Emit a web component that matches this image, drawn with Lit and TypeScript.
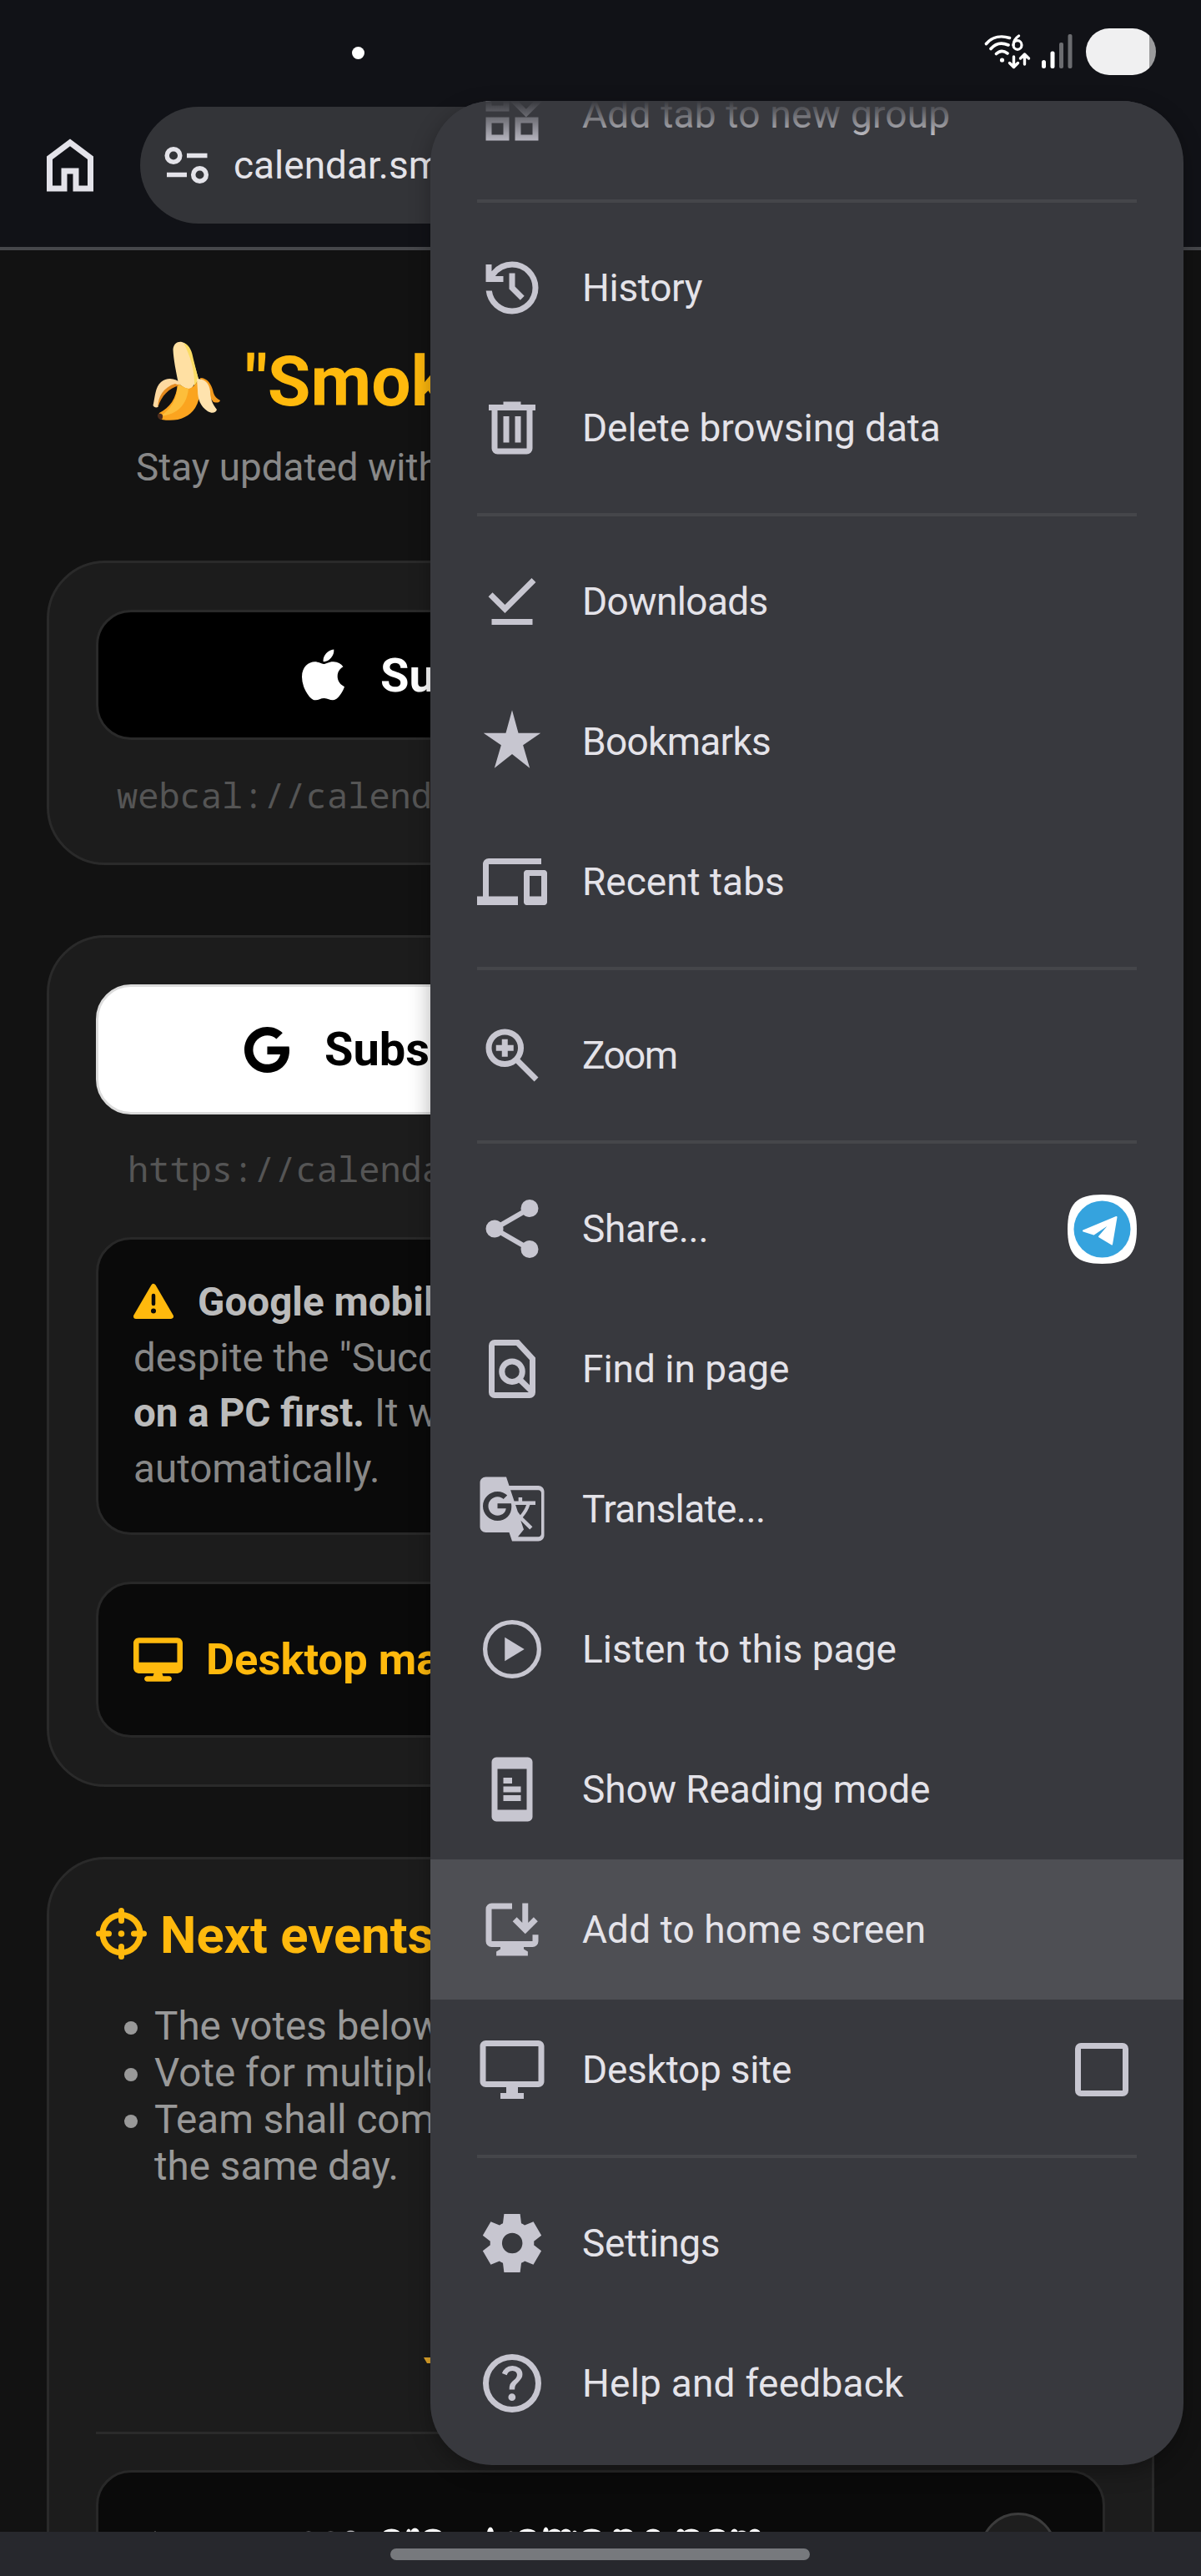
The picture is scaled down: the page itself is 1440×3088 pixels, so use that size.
import { LitElement, html, css, svg, nothing } from "lit";
import type { SVGTemplateResult } from "lit";
import { customElement, property } from "lit/decorators.js";

type MenuEntry = {
  icon: string;
  label: string;
  /** Letter spacing in px. */
  track?: number;
  active?: boolean;
  trailing?: "telegram" | "checkbox";
};

/** Icons drawn on the 960-unit Material Symbols grid. */
const SYMBOLS: Record<string, string> = {
  home: "M240-200h120v-240h240v240h120v-360L480-740 240-560v360Zm-80 80v-480l320-240 320 240v480H520v-240h-80v240H160Z",
  history:
    "M480-120q-138 0-240.5-91.5T122-440h82q14 104 92.5 172T480-200q117 0 198.5-81.5T760-480q0-117-81.5-198.5T480-760q-69 0-129 32t-101 88h110v80H120v-240h80v94q51-64 124.5-99T480-840q75 0 140.5 28.5t114 77q48.5 48.5 77 114T840-480q0 75-28.5 140.5t-77 114q-48.5 48.5-114 77T480-120Zm112-192L440-464v-216h80v184l128 128-56 56Z",
  trash:
    "M280-120q-33 0-56.5-23.5T200-200v-520h-40v-80h200v-40h240v40h200v80h-40v520q0 33-23.5 56.5T680-120H280Zm400-600H280v520h400v-520ZM360-280h80v-360h-80v360Zm160 0h80v-360h-80v360Z",
  downloads: "M382-320 155-547l57-57 170 170 366-366 57 57-423 423ZM200-160v-80h560v80H200Z",
  star: "M480-911 566-598H872L630-432 722-116 480-310 238-116 330-432 88-598H394Z",
  zoom: "M784-120 532-372q-30 24-69 38t-83 14q-109 0-184.5-75.5T120-580q0-109 75.5-184.5T380-840q109 0 184.5 75.5T640-580q0 44-14 83t-38 69l252 252-56 56ZM380-400q75 0 127.5-52.5T560-580q0-75-52.5-127.5T380-760q-75 0-127.5 52.5T200-580q0 75 52.5 127.5T380-400Zm-40-60v-80h-80v-80h80v-80h80v80h80v80h-80v80h-80Z",
  share:
    "M720-80q-50 0-85-35t-35-85q0-7 1-14.5t3-13.5L322-392q-17 15-38 23.5t-44 8.5q-50 0-85-35t-35-85q0-50 35-85t85-35q23 0 44 8.5t38 23.5l282-164q-2-6-3-13.5t-1-14.5q0-50 35-85t85-35q50 0 85 35t35 85q0 50-35 85t-85 35q-23 0-44-8.5T638-672L356-508q2 6 3 13.5t1 14.5q0 7-1 14.5t-3 13.5l282 164q17-15 38-23.5t44-8.5q50 0 85 35t35 85q0 50-35 85t-85 35Z",
  settings:
    "m370-80-16-128q-13-5-24.5-12T307-235l-119 50L78-375l103-78q-1-7-1-13.5v-27q0-6.5 1-13.5L78-585l110-190 119 50q11-8 23-15t24-12l16-128h220l16 128q13 5 24.5 12t22.5 15l119-50 110 190-103 78q1 7 1 13.5v27q0 6.5-2 13.5l103 78-110 190-118-50q-11 8-23 15t-24 12L590-80H370Zm112-260q58 0 99-41t41-99q0-58-41-99t-99-41q-59 0-99.5 41T342-480q0 58 40.5 99t99.5 41Z",
  help: "M478-240q21 0 35.5-14.5T528-290q0-21-14.5-35.5T478-340q-21 0-35.5 14.5T428-290q0 21 14.5 35.5T478-240Zm-36-154h74q0-33 7.5-52t42.5-52q26-26 41-49.5t15-56.5q0-56-41-86t-97-30q-57 0-92.5 30T342-618l66 26q5-18 22.5-39t53.5-21q32 0 48 17.5t16 38.5q0 20-12 37.5T506-526q-44 39-54 59t-10 73Zm38 314q-83 0-156-31.5T197-197q-54-54-85.5-127T80-480q0-83 31.5-156T197-763q54-54 127-85.5T480-880q83 0 156 31.5T763-763q54 54 85.5 127T880-480q0 83-31.5 156T763-197q-54 54-127 85.5T480-80Zm0-80q134 0 227-93t93-227q0-134-93-227t-227-93q-134 0-227 93t-93 227q0 134 93 227t227 93Z",
};

/** Icons drawn on the 24-unit grid. */
const GLYPHS: Record<string, SVGTemplateResult> = {
  group: svg`<g fill="none" stroke="currentColor" stroke-width="2">
      <path d="M4 4h6v6H4zM4 14h6v6H4zM14 14h6v6h-6z" />
      <path d="M16.8 3.1 21 7.4l-4.2 4.2-4.2-4.2z" />
    </g>`,
  devices: svg`<path d="M4 6h18V4H4c-1.1 0-2 .9-2 2v11H0v3h14v-3H4V6zm19 2h-6c-.55 0-1 .45-1 1v10c0 .55.45 1 1 1h6c.55 0 1-.45 1-1V9c0-.55-.45-1-1-1zm-1 9h-4v-7h4v7z" />`,
  find: svg`<g fill="none" stroke="currentColor" stroke-width="2">
      <path d="M5 4a1 1 0 0 1 1-1h7.9L19 8.5V20a1 1 0 0 1-1 1H6a1 1 0 0 1-1-1Z" />
      <circle cx="12" cy="12.9" r="3.5" />
      <path d="m14.4 15.4 4.5 4.4" />
    </g>`,
  translate: svg`<path d="M21 4H11l-1-3H3c-1.1 0-2 .9-2 2v15c0 1.1.9 2 2 2h8l1 3h9c1.1 0 2-.9 2-2V6c0-1.1-.9-2-2-2zM7 16c-2.76 0-5-2.24-5-5s2.24-5 5-5c1.35 0 2.48.5 3.35 1.3L9.03 8.57c-.38-.36-1.04-.78-2.03-.78-1.74 0-3.15 1.44-3.15 3.21S5.26 14.21 7 14.21c2.01 0 2.84-1.44 2.92-2.41H7v-1.71h4.68c.07.31.12.61.12 1.02C11.8 13.97 9.89 16 7 16zm6.17-5.42h3.7c-.43 1.25-1.11 2.43-2.05 3.47-.31-.35-.6-.72-.86-1.1l-.79-2.37zm8.83 9.92c0 .55-.45 1-1 1H14l2-2.5-1.04-3.1 3.1 3.1.92-.92-3.3-3.25.02-.02c1.13-1.25 1.93-2.69 2.4-4.22H20v-1.3h-4.53V8h-1.29v1.29h-1.44L11.46 5.5h9.54c.55 0 1 .45 1 1v14z" />`,
  listen: svg`<circle cx="12" cy="12" r="9.25" fill="none" stroke="currentColor" stroke-width="1.5" />
    <path d="M9.5 7.9v8.2L16.2 12z" />`,
  reading: svg`<path fill-rule="evenodd" d="M6.6 1h10.8A1.6 1.6 0 0 1 19 2.6v18.8a1.6 1.6 0 0 1-1.6 1.6H6.6A1.6 1.6 0 0 1 5 21.4V2.6A1.6 1.6 0 0 1 6.6 1ZM7 5v14h10V5Z" />
    <path d="M9 8h3v2H9zM9 11h6v2H9zM9 14h6v2H9z" />`,
  install: svg`<g fill="none" stroke="currentColor" stroke-width="2">
      <path d="M12 4H5a1 1 0 0 0-1 1v11a1 1 0 0 0 1 1h14a1 1 0 0 0 1-1v-2.2" />
      <path d="M16.5 3v9.2M12.9 8.5l3.6 3.6 3.6-3.6" />
    </g>
    <path d="M8 17.500h8v1.200l1.400.9V21H6.600v-1.400l1.400-.9z" />`,
  desktop: svg`<path d="M21 2H3c-1.1 0-2 .9-2 2v12c0 1.1.9 2 2 2h7v2H8v2h8v-2h-2v-2h7c1.1 0 2-.9 2-2V4c0-1.1-.9-2-2-2zm0 14H3V4h18v12z" />`,
};

const SECTIONS: MenuEntry[][] = [
  [{ icon: "group", label: "Add tab to new group", track: 0.22 }],
  [
    { icon: "history", label: "History", track: -0.3 },
    { icon: "trash", label: "Delete browsing data", track: -0.08 },
  ],
  [
    { icon: "downloads", label: "Downloads", track: -0.65 },
    { icon: "star", label: "Bookmarks", track: -0.7 },
    { icon: "devices", label: "Recent tabs" },
  ],
  [{ icon: "zoom", label: "Zoom", track: -1.6 }],
  [
    { icon: "share", label: "Share...", track: -0.3, trailing: "telegram" },
    { icon: "find", label: "Find in page" },
    { icon: "translate", label: "Translate...", track: -0.6 },
    { icon: "listen", label: "Listen to this page", track: 0.05 },
    { icon: "reading", label: "Show Reading mode", track: -0.12 },
    { icon: "install", label: "Add to home screen", track: 0.1, active: true },
    { icon: "desktop", label: "Desktop site", track: -0.25, trailing: "checkbox" },
  ],
  [
    { icon: "settings", label: "Settings", track: -0.35 },
    { icon: "help", label: "Help and feedback", track: 0.22 },
  ],
];

@customElement("menu-icon")
class MenuIcon extends LitElement {
  @property() name = "";

  static styles = css`
    :host { display: block; width: 84px; height: 84px; flex: none; }
    svg { display: block; width: 100%; height: 100%; fill: currentColor; }
  `;

  render() {
    const path = SYMBOLS[this.name];
    return path
      ? html`<svg viewBox="0 -960 960 960" aria-hidden="true"><path d=${path} /></svg>`
      : html`<svg viewBox="0 0 24 24" aria-hidden="true">${GLYPHS[this.name]}</svg>`;
  }
}

@customElement("status-bar")
class StatusBar extends LitElement {
  static styles = css`
    :host { display: flex; height: 128px; box-sizing: border-box; padding: 34px 54px 38px 422px; background: #111217; align-items: center; justify-content: space-between; }
    .dot { width: 15px; height: 15px; border-radius: 50%; background: #fff; margin-top: 2px; }
    .right { display: flex; align-items: center; }
    svg { display: block; }
    .bars { margin-left: 13px; }
    .battery { width: 84px; height: 56px; margin-left: 16px; border-radius: 28px; background: linear-gradient(to right, #f0f0f1 76px, #9b9b9d 76px); }
  `;

  render() {
    return html`
      <span class="dot"></span>
      <div class="right">
        <svg width="56" height="42" viewBox="0 0 56 42" fill="none" stroke="#fff" stroke-linecap="round">
          <path stroke-width="3.600" d="M2.500 11.500C10 2.500 21 1.500 30.500 4.500M8 17.500c6-7 13-8 21-4.500M14.500 23.500c4-4 9-4 13.500-.5" />
          <circle cx="21.500" cy="31" r="2.600" fill="#fff" stroke="none" />
          <path stroke-width="3.200" d="M41.500 2c-4.500 3-6.500 7-6.500 11" />
          <ellipse cx="40" cy="13" rx="5" ry="5.300" stroke-width="3.200" />
          <path stroke-width="3.400" stroke-linejoin="round" d="M35.500 27v12M30.500 34.500l5 5 5-5M48.500 36V24M43.500 29l5-5 5 5" />
        </svg>
        <svg class="bars" width="37" height="42" viewBox="0 0 37 42">
          <rect x="0" y="31" width="5" height="10" rx="2.500" fill="#fff" />
          <rect x="10.500" y="20.500" width="5" height="20.500" rx="2" fill="#fff" />
          <rect x="21" y="10" width="5" height="31" rx="2" fill="#6b6c70" />
          <rect x="31.500" y="0" width="5" height="41" rx="2" fill="#6b6c70" />
        </svg>
        <div class="battery"></div>
      </div>
    `;
  }
}

@customElement("browser-toolbar")
class BrowserToolbar extends LitElement {
  static styles = css`
    :host { display: flex; height: 172px; box-sizing: border-box; padding-bottom: 28px; padding-left: 42px; border-bottom: 4px solid #46474b; background: #111217; align-items: center; gap: 42px; color: #e3e2e9; }
    .omnibox { flex: 1; height: 140px; margin-right: 56px; box-sizing: border-box; padding-left: 29px; display: flex; align-items: center; border-radius: 70px; background: #333438; font: 46px/54px Roboto, sans-serif; color: #e4e3e9; }
    .tune { display: block; margin-right: 29px; }
  `;

  render() {
    return html`
      <menu-icon name="home"></menu-icon>
      <div class="omnibox">
        <svg class="tune" width="54" height="46" viewBox="0 0 54 46" fill="none" stroke="currentColor" stroke-width="5.500">
          <circle cx="11" cy="11.500" r="7.800" />
          <path d="M27 11.500h24.500M3 34.500h24" />
          <circle cx="42.500" cy="34.500" r="7.800" />
        </svg>
        <span>calendar.sm</span>
      </div>
    `;
  }
}

@customElement("overflow-menu")
class OverflowMenu extends LitElement {
  static styles = css`
    :host { display: flex; flex-direction: column; justify-content: flex-end; box-sizing: border-box; padding-bottom: 14px; overflow: hidden; border-radius: 74px; background: #38393e; box-shadow: 0 8px 26px rgba(0, 0, 0, 0.3); font-family: Roboto, sans-serif; }
    .list { flex: none; display: flex; flex-direction: column; }
    .row { height: 168px; display: flex; align-items: center; padding: 0 56px; box-sizing: border-box; color: #c7c6d0; }
    .row.active { background: #4e4f54; }
    .label { margin-left: 42px; flex: 1; font-size: 46px; line-height: 54px; white-space: nowrap; color: #e4e3e9; }
    .divider { height: 4px; margin: 18px 56px; background: #45464a; }
    .fade { position: absolute; inset: 0 0 auto 0; height: 54px; background: linear-gradient(to bottom, #38393e, rgba(56, 57, 62, 0)); }
    .box { width: 64px; height: 64px; box-sizing: border-box; border: 7px solid #c7c6d0; border-radius: 7px; margin-right: 10px; }
    .app { display: block; }
  `;

  private trailing(kind: MenuEntry["trailing"]) {
    if (kind === "checkbox") return html`<span class="box"></span>`;
    if (kind === "telegram") {
      return html`<svg class="app" width="83" height="83" viewBox="0 0 83 83">
        <path fill="#fff" d="M41.500 0C72 0 83 11 83 41.500S72 83 41.500 83 0 72 0 41.500 11 0 41.500 0Z" />
        <circle cx="41.500" cy="41.500" r="34" fill="#35a3de" />
        <path fill="#fff" stroke="#fff" stroke-width="2" stroke-linejoin="round" d="M19 43.500 58.500 27 53 59.500 38 50.500 53 33 31.500 47.500Z" />
      </svg>`;
    }
    return nothing;
  }

  render() {
    return html`
      <div class="list">
        ${SECTIONS.map(
          (section, i) => html`
            ${i ? html`<div class="divider"></div>` : nothing}
            ${section.map(
              (e) => html`<div class="row ${e.active ? "active" : ""}">
                <menu-icon name=${e.icon}></menu-icon>
                <span class="label" style="letter-spacing:${e.track ?? 0}px">${e.label}</span>
                ${this.trailing(e.trailing)}
              </div>`
            )}
          `
        )}
      </div>
      <div class="fade"></div>
    `;
  }
}

/** Visible tops of the vote title, cut by the navigation bar: x, width, height, shade. */
const TITLE_TOPS: [number, number, number, string][] = [
  [184, 4, 2, "#aaa"], [364, 12, 2, "#99999c"], [390, 13, 2, "#99999c"], [414, 13, 3, "#b5b5b8"],
  [459, 21, 5, "#fff"], [487, 6, 5, "#fff"], [492, 11, 6, "#fff"], [508, 22, 5, "#fff"],
  [584, 8, 7, "#fff"], [609, 7, 2, "#bbb"], [622, 21, 5, "#fff"], [651, 7, 7, "#fff"],
  [657, 16, 5, "#fff"], [672, 13, 5, "#fff"], [686, 6, 3, "#fff"], [698, 23, 5, "#fff"],
  [735, 10, 5, "#fff"], [742, 17, 5, "#fff"], [774, 18, 5, "#fff"], [811, 10, 5, "#fff"],
  [819, 20, 5, "#fff"], [849, 21, 5, "#fff"], [876, 9, 5, "#fff"], [883, 13, 3, "#fff"],
  [898, 14, 5, "#fff"],
];

@customElement("calendar-page")
class CalendarPage extends LitElement {
  static styles = css`
    :host { display: flex; flex-direction: column; box-sizing: border-box; overflow: hidden; background: #121212; padding: 108px 56px 0; font-family: Roboto, sans-serif; white-space: nowrap; }
    svg { display: block; flex: none; }
    .title { display: flex; align-items: center; height: 98px; padding-left: 126px; gap: 28px; font-size: 84px; line-height: 98px; font-weight: 700; color: #ffb90d; }
    .title span { padding-top: 2px; }
    .subtitle { margin: 28px 0 84px; padding-left: 107px; height: 54px; font-size: 45.8px; line-height: 54px; color: #888; }
    .card { flex: none; box-sizing: border-box; border: 3px solid #2a2a2a; border-radius: 70px; background: #1c1c1c; padding: 56px; margin-bottom: 84px; display: flex; flex-direction: column; }
    .first { height: 365px; }
    .second { height: 1021px; }
    .button { height: 156px; box-sizing: border-box; border: 3px solid #2a2a2a; border-radius: 42px; display: flex; align-items: center; font-size: 56px; font-weight: 700; line-height: 66px; }
    .apple { background: #000; color: #fff; padding-left: 244px; gap: 43px; }
    .apple span { padding-top: 1px; }
    .google { background: #fff; color: #000; border-color: #dcdcdc; padding-left: 175px; gap: 42px; }
    .url { margin-top: 42px; height: 48px; font: 42px/48px "Noto Sans Mono", "DejaVu Sans Mono", monospace; color: #555; padding-left: 25px; }
    .url.https { margin-top: 41px; padding-left: 38px; margin-bottom: 58px; }
    .box { box-sizing: border-box; border: 3px solid #282828; border-radius: 42px; background: #0a0a0a; }
    .note { height: 357px; padding: 42px 42px 0; font-size: 47.6px; line-height: 66.64px; color: #888; }
    .note strong { color: #bbb; font-weight: 700; }
    .line { display: flex; align-items: center; height: 66.64px; }
    .line svg { margin-right: 29px; margin-top: -3px; }
    .manual { height: 187px; margin-top: 56px; padding-left: 42px; display: flex; align-items: center; gap: 28px; font-size: 52.5px; font-weight: 700; color: #ffb90d; }
    .manual span { padding-bottom: 2px; }
    .heading { display: flex; align-items: center; gap: 16px; height: 70px; font-size: 61.6px; line-height: 70px; font-weight: 700; color: #ffb90d; }
    .heading svg { margin-top: -4px; }
    .list { margin: 46px 0 0; padding: 0; list-style: none; font-size: 47.6px; line-height: 56px; color: #999; }
    .list li { display: flex; padding-left: 34px; gap: 20px; }
    .bullet { flex: none; width: 16px; height: 16px; border-radius: 50%; margin-top: 22px; background: #999; }
    .spacer { height: 290px; position: relative; }
    .tick { position: absolute; left: 393px; top: 201px; width: 20px; height: 7px; background: #e3a72b; clip-path: polygon(0 0, 100% 0, 100% 100%, 20% 100%); }
    .rule { height: 3px; background: #2a2a2a; }
    .vote { height: 300px; margin-top: 43px; position: relative; overflow: hidden; }
    .third { height: 1100px; }
    .frag { position: absolute; left: 0; top: 0; }
    .round { position: absolute; left: 1057px; top: 48px; width: 92px; height: 92px; box-sizing: border-box; border-radius: 50%; background: #1e1e1e; border: 3px solid #3c3c3c; }
  `;

  render() {
    return html`
      <div class="title">
        <svg width="84" height="96" viewBox="0 0 84 96" role="img">
          <path fill="#f39a1d" d="M58 44c9 0 14 8 16 18 1 4 4 7 8 9-1 3-4 3-8 2L62 58Z" />
          <path fill="#ffe0a3" d="M25.500 10C26 3 31 0 36 1c8 2 11 10 13 20l7 24-11 15-13-9C29 36 26 22 25.500 10Z" />
          <path fill="#fbdc63" d="M38 2c8 3 10 10 12 20l6 24-5 8c1-18-5-37-13-52Z" />
          <path fill="#fba41f" d="M31 50c3 3 8 6 13 7 5-1 8-5 11-9 4 8 4 20-3 32-8 12-22 17-40 14-4-1-5-4-3-8 12-6 21-17 22-36Z" />
          <path fill="#fdbe3b" d="M31 50c3 3 8 6 13 7-2 19-13 31-34 33 13-8 21-21 21-40Z" />
          <path fill="#fdd9a0" d="M35 51C29 44 18 43 11 49 4 55 4 67 1.500 77c1 2 3 3 6 2C9 67 19 55 31 52Z" />
          <path fill="#e38a1e" d="M33 53C21 56 11 66 7.500 79 7 67 14 55 28 51Z" />
          <path fill="#ffe3ae" d="M54 45c9 0 15 5 16 15 0 9 3 16 8 22-1 4-6 5-11 2-9-6-12-15-12-25Z" />
          <path fill="#4c2c1d" d="M8 87c3-1 6 1 5 4 0 3-2 4-4 2-2-1-3-5-1-6Z" />
        </svg>
        <span>"Smok</span>
      </div>
      <div class="subtitle">Stay updated with</div>

      <section class="card first">
        <div class="button apple">
          <svg width="51" height="62" viewBox="4 32 376 448" fill="#fff">
            <path d="M318.700 268.700c-.2-36.700 16.400-64.400 50-84.800-18.800-26.900-47.200-41.700-84.700-44.600-35.500-2.800-74.300 20.700-88.500 20.700-15 0-49.400-19.700-76.400-19.700C63.300 141.200 4 184.800 4 273.500q0 39.300 14.400 81.200c12.800 36.700 59 126.700 107.200 125.200 25.200-.6 43-17.900 75.800-17.900 31.800 0 48.300 17.900 76.400 17.900 48.600-.7 90.400-82.500 102.600-119.300-65.200-30.700-61.700-90-61.700-91.900zm-56.600-164.200c27.300-32.400 24.800-61.900 24-72.500-24.100 1.400-52 16.400-67.900 34.900-17.500 19.800-27.800 44.300-25.600 71.900 26.100 2 49.900-11.400 69.500-34.300z" />
          </svg>
          <span>Su</span>
        </div>
        <div class="url">webcal://calend</div>
      </section>

      <section class="card second">
        <div class="button google">
          <svg width="54" height="55" viewBox="0 8 488 496">
            <path d="M488 261.800C488 403.300 391.100 504 248 504 110.800 504 0 393.200 0 256S110.800 8 248 8c66.800 0 123 24.500 166.300 64.900l-67.500 64.900C258.500 52.600 94.300 116.600 94.300 256c0 86.500 69.100 156.600 153.700 156.600 98.200 0 135-70.400 140.800-106.900H248v-85.300h236.100c2.300 12.700 3.900 24.900 3.900 41.400z" />
          </svg>
          <span>Subs</span>
        </div>
        <div class="url https">https://calenda</div>
        <div class="box note">
          <div class="line">
            <svg width="48" height="43" viewBox="0 0 48 43">
              <path fill="#ffb90d" stroke="#ffb90d" stroke-width="6" stroke-linejoin="round" d="M24 4 45 40H3Z" />
              <path stroke="#0a0a0a" stroke-width="4.500" stroke-linecap="round" d="M24 15v10" />
              <circle cx="24" cy="33.500" r="3" fill="#0a0a0a" />
            </svg>
            <strong>Google mobil</strong>
          </div>
          <div>despite the "Succ</div>
          <div><strong>on a PC first.</strong> It w</div>
          <div>automatically.</div>
        </div>
        <div class="box manual">
          <svg width="59" height="53" viewBox="0 0 576 512" fill="#ffb90d">
            <path d="M64 0C28.700 0 0 28.700 0 64V352c0 35.300 28.700 64 64 64H240l-10.700 32H160c-17.700 0-32 14.300-32 32s14.300 32 32 32H416c17.700 0 32-14.300 32-32s-14.300-32-32-32H346.700L336 416H512c35.300 0 64-28.700 64-64V64c0-35.300-28.700-64-64-64H64zM512 64V288H64V64H512z" />
          </svg>
          <span>Desktop ma</span>
        </div>
      </section>

      <section class="card third">
        <div class="heading">
          <svg width="61" height="62" viewBox="0 0 61 62" fill="none" stroke="#ffb90d" stroke-width="7" stroke-linecap="round">
            <circle cx="30.500" cy="31" r="22.500" />
            <path d="M30.500 3.500v12M30.500 46.500v12M3.500 31h12M45.500 31h12" />
            <circle cx="30.500" cy="31" r="3.800" fill="#ffb90d" stroke="none" />
          </svg>
          <span>Next events</span>
        </div>
        <ul class="list">
          <li><span class="bullet"></span><span>The votes below</span></li>
          <li><span class="bullet"></span><span>Vote for multiple</span></li>
          <li><span class="bullet"></span><span>Team shall com<br />the same day.</span></li>
        </ul>
        <div class="spacer"><span class="tick"></span></div>
        <div class="rule"></div>
        <div class="box vote">
          <svg class="frag" width="900" height="73" viewBox="118 2963 900 72">
            ${TITLE_TOPS.map(
              ([x, w, h, c]) => svg`<ellipse cx=${x + w / 2} cy="3036" rx=${w / 2} ry=${h + 1} fill=${c} />`
            )}
          </svg>
          <span class="round"></span>
        </div>
      </section>
    `;
  }
}

@customElement("app-root")
class AppRoot extends LitElement {
  static styles = css`
    :host { display: flex; flex-direction: column; position: relative; width: 1440px; height: 3088px; overflow: hidden; background: #121212; }
    status-bar, browser-toolbar { flex: none; }
    .page { flex: 1; min-height: 0; }
    .nav { flex: none; height: 53px; box-sizing: border-box; padding: 20px 0 0 468px; background: #27282d; }
    .handle { width: 503px; height: 14px; border-radius: 7px; background: #77797d; }
    .menu { position: absolute; left: 516px; top: 121px; width: 903px; height: 2834px; }
  `;

  render() {
    return html`
      <status-bar></status-bar>
      <browser-toolbar></browser-toolbar>
      <calendar-page class="page"></calendar-page>
      <div class="nav"><div class="handle"></div></div>
      <overflow-menu class="menu"></overflow-menu>
    `;
  }
}
